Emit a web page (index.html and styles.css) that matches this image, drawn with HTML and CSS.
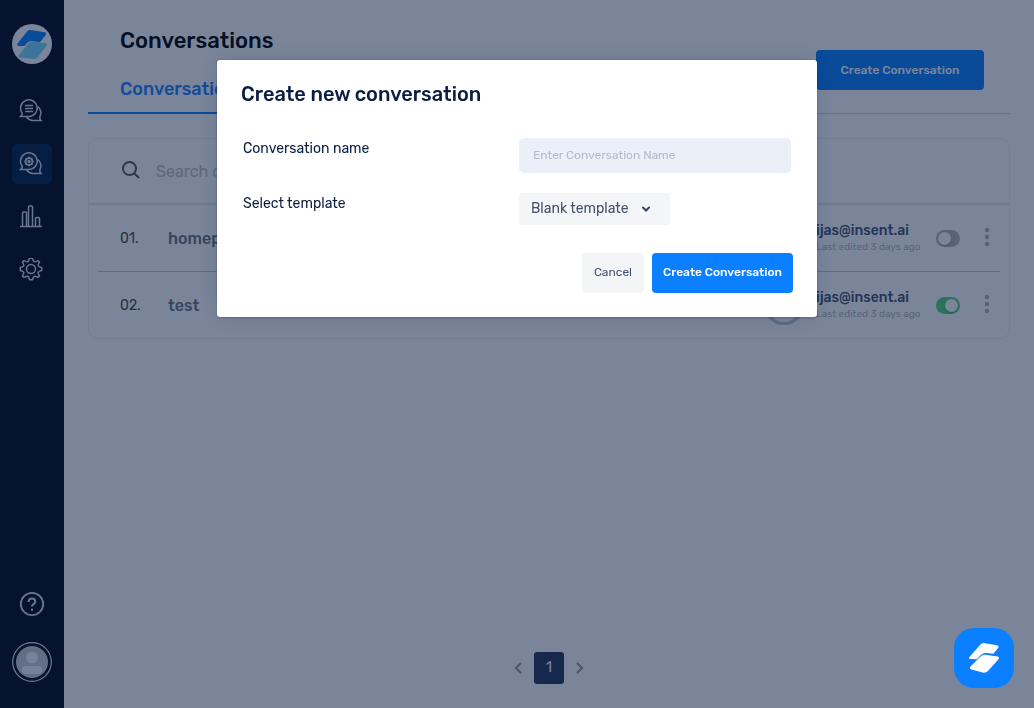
FILE: index.html
```html
<!DOCTYPE html>
<html lang="en">
<head>
<meta charset="utf-8">
<title>Conversations</title>
<link rel="stylesheet" href="styles.css">
</head>
<body>
<div class="app">
  <nav class="sidebar" aria-label="Main">
    <a class="logo" href="#" aria-label="Home">
      <svg width="40" height="40" viewBox="0 0 40 40"><path d="M5.500 19.500L15.500 7Q16.500 5.800 18 6L33 8.200Q35 8.700 34 10.500L28 18.200 20 17Q17 16.800 15 19L12.500 22 7 22Q4.300 21.500 5.500 19.500z" fill="#0a7fff"/><path d="M6.500 31.500L16.500 19.300Q17.800 17.700 20 17.500L34 19.200Q35.800 19.700 34.800 21.400L25.500 33.500Q24 35.500 21.500 35L7.500 33.500Q5.500 33 6.500 31.500z" fill="#78dcff"/></svg>
    </a>
    <a class="nav-item" href="#" aria-label="Chats">
      <svg class="icon" width="24" height="24" viewBox="0 0 24 24"><path d="M1.500 17.500H10A8.300 8.300 0 1 0 3.200 14.200Q3.600 16 1.500 17.500z"/><path d="M18.800 7.500A8 8 0 0 1 20.800 18Q20.500 20 22 21.500H14A8.500 8.500 0 0 1 7.500 18"/><path d="M6 6.500h8M6 9.500h8M6 12.500h8"/></svg>
    </a>
    <a class="nav-item active" href="#" aria-label="Conversation settings" aria-current="page">
      <svg class="icon" width="24" height="24" viewBox="0 0 24 24"><path d="M1.500 17.500H10A8.300 8.300 0 1 0 3.200 14.200Q3.600 16 1.500 17.500z"/><path d="M18.800 7.500A8 8 0 0 1 20.800 18Q20.500 20 22 21.500H14A8.500 8.500 0 0 1 7.500 18"/><circle cx="10" cy="9.500" r="3.300"/><circle cx="10" cy="9.500" r="1"/><path d="M10 4.800v1.400M10 12.800v1.400M5.300 9.500h1.400M13.300 9.500h1.400M6.700 6.200l1 1M12.300 11.800l1 1M13.300 6.200l-1 1M7.700 11.800l-1 1" stroke-width="2"/></svg>
    </a>
    <a class="nav-item" href="#" aria-label="Analytics">
      <svg class="icon" width="24" height="24" viewBox="0 1 24 24"><path d="M1 22.500h22M3.500 22V9q0-1 1-1h2q1 0 1 1v13M9.500 22V3q0-1 1-1h2q1 0 1 1V22M16.500 22v-7.500q0-1 1-1h2q1 0 1 1V22"/></svg>
    </a>
    <a class="nav-item" href="#" aria-label="Settings">
      <svg class="icon" width="24" height="24" viewBox="0 1 24 24"><circle cx="12" cy="12" r="4.500"/><path d="M10.500 1.300h3q.6 2.900 1.800 3.400t3.600-1.200l1.600 1.600q-1.700 2.600-1.200 3.700t3.400 1.700v3q-2.900.6-3.400 1.800t1.200 3.600l-1.600 1.600q-2.500-1.700-3.600-1.200t-1.800 3.400h-3q-.6-2.900-1.800-3.400t-3.600 1.200l-1.600-1.600q1.700-2.500 1.200-3.600t-3.400-1.800v-3q2.900-.6 3.400-1.700t-1.200-3.700l1.600-1.600q2.500 1.700 3.600 1.200t1.800-3.400z" stroke-linejoin="round"/></svg>
    </a>
    <a class="nav-item help" href="#" aria-label="Help">
      <svg class="icon" width="26" height="26" viewBox="0 0 26 26"><circle cx="13" cy="13" r="11.200" stroke-width="1.800"/><path d="M9.700 11V10.300Q9.900 7.500 13 7.500T16.300 10.600Q16.200 12.200 14.500 13.100 13 14 13 15.500M13 17.800v2" stroke-width="2"/></svg>
    </a>
    <a class="profile" href="#" aria-label="Profile">
      <svg width="40" height="40" viewBox="0 0 40 40"><circle cx="20" cy="20" r="19.300" fill="none" stroke="#e6e8ec" stroke-width="1.200"/><circle cx="20" cy="20" r="16" fill="#c8ccd4"/><circle cx="20" cy="15.500" r="6" fill="#f5f6f8"/><rect x="10" y="24" width="20" height="8" rx="4" fill="#f5f6f8"/></svg>
    </a>
  </nav>

  <main class="main">
    <header class="page-head">
      <h1 class="page-title">Conversations</h1>
      <div class="tabs"><a class="tab" href="#">Conversations</a></div>
      <button class="btn primary head-button" type="button">Create Conversation</button>
    </header>

    <section class="list" aria-label="Conversation list">
      <label class="search">
        <svg class="search-icon" width="20" height="20" viewBox="0 0 20 20"><circle cx="8.500" cy="8.500" r="6.500"/><path d="M13.300 13.300L18 18"/></svg>
        <input class="search-input" type="search" placeholder="Search conversations" aria-label="Search conversations">
      </label>
      <ul class="rows">
        <li class="row">
          <span class="number">01.</span>
          <a class="name" href="#">homepage</a>
          <span class="avatar"></span>
          <div class="editor"><div class="email">ijas@insent.ai</div><div class="edited">Last edited 3 days ago</div></div>
          <input class="toggle" type="checkbox" aria-label="Enable homepage">
          <button class="more" type="button" aria-label="More actions for homepage"><svg width="6" height="20" viewBox="0 0 6 20"><circle cx="3" cy="3" r="2.200"/><circle cx="3" cy="10" r="2.200"/><circle cx="3" cy="17" r="2.200"/></svg></button>
        </li>
        <li class="row">
          <span class="number">02.</span>
          <a class="name" href="#">test</a>
          <span class="avatar"></span>
          <div class="editor"><div class="email">ijas@insent.ai</div><div class="edited">Last edited 3 days ago</div></div>
          <input class="toggle" type="checkbox" aria-label="Enable test" checked>
          <button class="more" type="button" aria-label="More actions for test"><svg width="6" height="20" viewBox="0 0 6 20"><circle cx="3" cy="3" r="2.200"/><circle cx="3" cy="10" r="2.200"/><circle cx="3" cy="17" r="2.200"/></svg></button>
        </li>
      </ul>
    </section>

    <nav class="pagination" aria-label="Pages">
      <button class="page-arrow" type="button" aria-label="Previous page"><svg width="12" height="12" viewBox="0 0 12 12"><path d="M8.500 1.500L4 6l4.500 4.500"/></svg></button>
      <button class="page-number" type="button" aria-current="page">1</button>
      <button class="page-arrow" type="button" aria-label="Next page"><svg width="12" height="12" viewBox="0 0 12 12"><path d="M3.500 1.500L8 6l-4.500 4.500"/></svg></button>
    </nav>
  </main>
</div>

<div class="overlay">
  <form class="modal" role="dialog" aria-modal="true" aria-labelledby="modal-title">
    <h2 class="modal-title" id="modal-title">Create new conversation</h2>
    <div class="fields">
      <label class="field-label" for="conversation-name">Conversation name</label>
      <input class="text-field" id="conversation-name" type="text" placeholder="Enter Conversation Name">
      <label class="field-label" for="template">Select template</label>
      <div class="select-wrap">
        <select class="select" id="template"><option>Blank template</option></select>
        <svg class="select-arrow" width="10" height="8" viewBox="0 0 10 8"><path d="M2 2.500L5 5.500l3-3"/></svg>
      </div>
    </div>
    <div class="actions">
      <button class="btn subtle" type="button">Cancel</button>
      <button class="btn primary submit" type="submit">Create Conversation</button>
    </div>
  </form>
</div>

<button class="launcher" type="button" aria-label="Open chat">
  <svg width="60" height="60" viewBox="0 0 60 60"><path d="M15.500 29L26.500 16.500Q28.500 14.800 31 15.200L43 17.200Q45.500 17.800 44 20L39.500 25.800 32 25Q28.500 24.800 26.200 27.500L22.800 31.300 16.500 31Q14 30.800 15.500 29z"/><path d="M16.500 38.500L26.500 28.500Q28.500 26.400 31.500 26.700L43.500 28.600Q46 29.200 44.500 31.300L34 43Q31.800 45.200 28.500 44.500L17.500 41.500Q14.800 40.500 16.500 38.500z"/></svg>
</button>
</body>
</html>
```
FILE: styles.css
```css
* { box-sizing: border-box; }

body {
  margin: 0;
  background: #fff;
  color: #091e42;
  font-family: Rubik, Inter, "Noto Sans", sans-serif;
  font-size: 14px;
  line-height: 20px;
}

button, input, select { font: inherit; color: inherit; }
button { border: 0; padding: 0; background: none; cursor: pointer; }
a { color: inherit; text-decoration: none; }
h1, h2, ul { margin: 0; padding: 0; }
svg { display: block; }

.app { display: flex; min-height: 100vh; }

.sidebar {
  display: flex;
  flex-direction: column;
  align-items: center;
  width: 64px;
  padding: 24px 0 26px;
  background: #000817;
}
.logo { border-radius: 50%; background: #fff; margin-bottom: 27px; }
.nav-item {
  display: grid;
  place-items: center;
  width: 40px;
  height: 40px;
  margin-bottom: 13px;
  padding-right: 2px;
  border-radius: 5px;
}
.nav-item.active { background: #002047; }
.icon { fill: none; stroke: #dadde4; stroke-width: 1.5; }
.help { margin-top: auto; margin-bottom: 18px; padding: 0; }

.main {
  flex: 1;
  display: flex;
  flex-direction: column;
  min-width: 0;
  padding: 24px;
}

.page-head {
  display: grid;
  grid-template-columns: 1fr auto;
  margin-bottom: 24px;
  padding-right: 26px;
  border-bottom: 1px solid #d5d8de;
}
.page-title {
  grid-column: 1;
  padding-left: 32px;
  color: #000;
  font-size: 22px;
  font-weight: 500;
  line-height: 34px;
}
.tabs { grid-column: 1; }
.tab {
  display: inline-block;
  margin: 14px 0 -1px;
  padding: 4px 32px 10px;
  border-bottom: 2px solid #0a7fff;
  color: #2680ff;
  font-size: 18px;
  font-weight: 500;
  line-height: 26px;
}
.head-button {
  grid-column: 2;
  grid-row: 1 / 3;
  align-self: start;
  margin-top: 26px;
  width: 168px;
}

.btn {
  height: 40px;
  padding: 0 11px;
  border-radius: 4px;
  font-size: 12px;
  font-weight: 500;
}
.primary { background: #0a7fff; color: #fff; }
.subtle { padding: 0 12px 2px; background: #f4f5f7; color: #42526e; font-weight: 400; }
.submit { padding-bottom: 2px; }

.list { border: 1px solid #eceff6; border-radius: 10px; }
.search {
  display: flex;
  align-items: center;
  gap: 15px;
  height: 66px;
  padding: 0 32px 2px;
  border-bottom: 2px solid #e4e8f3;
}
.search-icon { fill: none; stroke: #555; stroke-width: 2; }
.search-input {
  flex: 1;
  min-width: 0;
  padding: 4px 0 0;
  border: 0;
  outline: 0;
  background: none;
  font-size: 16px;
}
.search-input::placeholder { color: #c0c0c4; opacity: 1; }

.rows { list-style: none; padding: 0 9px; }
.row {
  display: flex;
  align-items: center;
  height: 66px;
  padding: 0 7px 0 22px;
}
.row + .row { height: 67px; border-top: 1px solid #c4c8d0; }
.number { width: 48px; padding-top: 2px; color: #4a4a4a; }
.name { flex: 1; padding-top: 2px; color: #6d7180; font-size: 16px; font-weight: 500; }
.avatar {
  width: 40px;
  height: 40px;
  margin-right: 12px;
  border: 3px solid #c0c6d4;
  border-radius: 50%;
}
.editor { width: 105px; margin-right: 15px; white-space: nowrap; }
.email { color: #42526e; font-weight: 500; line-height: 18px; }
.edited { overflow: hidden; color: #b4b8c0; font-size: 10px; line-height: 14px; }

.toggle {
  appearance: none;
  width: 24px;
  height: 17px;
  margin: 0 21px 0 0;
  padding: 2px;
  border-radius: 9px;
  background: #b5b5b9;
}
.toggle::before {
  content: "";
  display: block;
  width: 13px;
  height: 13px;
  border-radius: 50%;
  background: #fff;
  box-shadow: 0 1px 2px #0003;
}
.toggle:checked { background: #55d67a; }
.toggle:checked::before { margin-left: auto; }
.more { padding: 0 3px 2px; fill: #b0b4bd; }

.pagination {
  display: flex;
  justify-content: center;
  align-items: center;
  gap: 10px;
  margin-top: auto;
}
.page-arrow svg { fill: none; stroke: #9096a3; stroke-width: 2; stroke-linecap: round; }
.page-number {
  width: 30px;
  height: 32px;
  border-radius: 3px;
  background: #253858;
  color: #fff;
}

.overlay {
  position: fixed;
  inset: 0;
  padding-top: 60px;
  background: rgba(9, 30, 66, 0.54);
}
.modal {
  width: 600px;
  max-width: 100%;
  margin: 0 auto;
  padding: 22px 24px 24px;
  border-radius: 3px;
  background: #fff;
  box-shadow: 0 0 0 1px rgba(9, 30, 66, 0.08), 0 2px 1px rgba(9, 30, 66, 0.08), 0 0 20px -6px rgba(9, 30, 66, 0.31);
}
.modal-title { font-size: 20px; font-weight: 500; line-height: 24px; }
.fields {
  display: grid;
  grid-template-columns: 1fr 1fr;
  row-gap: 20px;
  padding: 32px 2px 28px;
}
.field-label { line-height: 22px; }
.text-field {
  height: 35px;
  min-width: 0;
  margin-left: 2px;
  padding: 0 14px 2px;
  border: 0;
  border-radius: 5px;
  background: #ebeff8;
  font-size: 12px;
}
.text-field::placeholder { color: #b5bac4; opacity: 1; }
.select-wrap { position: relative; justify-self: start; margin-left: 2px; }
.select {
  appearance: none;
  display: block;
  width: 151px;
  height: 32px;
  padding: 0 12px;
  border: 0;
  border-radius: 3px;
  background: #f4f5f7;
  color: #42526e;
}
.select-arrow {
  position: absolute;
  top: 12px;
  right: 19px;
  fill: none;
  stroke: #344563;
  stroke-width: 2;
  stroke-linecap: round;
  pointer-events: none;
}
.actions { display: flex; justify-content: flex-end; gap: 8px; }

.launcher {
  position: fixed;
  right: 20px;
  bottom: 20px;
  border-radius: 20px;
  background: #0a7fff;
  fill: #fff;
}
```
